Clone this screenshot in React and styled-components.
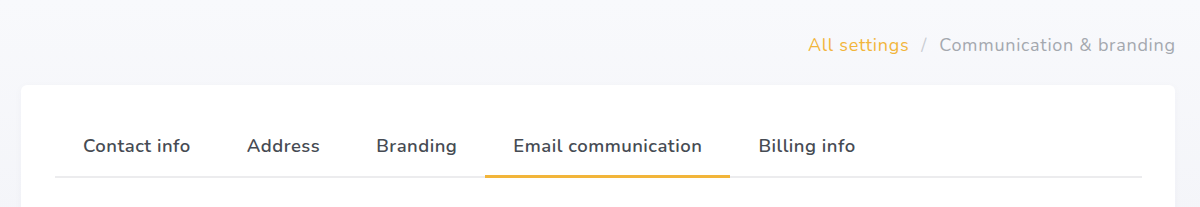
import React, { useState } from "react";
import styled, { createGlobalStyle } from "styled-components";

const Global = createGlobalStyle`
  html, body { margin: 0; padding: 0; }
  body {
    background: linear-gradient(180deg, #f8f9fc 0%, #f4f5f9 100%);
    font-family: "Nunito", "Lato", "Noto Sans", sans-serif;
    min-height: 207px;
  }
`;

const Page = styled.div`
  padding: 0 25px 0 21px;
`;

const Header = styled.div`
  height: 85px;
  display: flex;
  align-items: flex-start;
  justify-content: flex-end;
  padding-top: 33px;
  box-sizing: border-box;
`;

const Crumbs = styled.nav`
  display: flex;
  align-items: center;
  gap: 12px;
  font-size: 18px;
  line-height: 24px;
  letter-spacing: 0.72px;
`;

const CrumbLink = styled.a`
  color: #f2b53a;
  text-decoration: none;
  cursor: pointer;
`;

const Sep = styled.span`
  color: #c9ccd2;
`;

const CrumbCurrent = styled.span`
  color: #a4a8af;
  margin-right: -0.72px;
`;

const Card = styled.section`
  background: #fff;
  border-radius: 6px;
  padding: 30px 33px 40px 34px;
  box-shadow: 0 2px 10px rgba(30, 40, 80, 0.03);
`;

const TabList = styled.div`
  display: flex;
  box-shadow: inset 0 -2px 0 #ececee;
`;

const Tab = styled.button`
  appearance: none;
  background: none;
  border: 0;
  border-bottom: 3px solid ${(p) => (p.$active ? "#f2b53a" : "transparent")};
  padding: 19px 28px 17px;
  margin: 0;
  font-family: inherit;
  font-size: 18.5px;
  font-weight: 600;
  line-height: 24px;
  letter-spacing: 0.5px;
  color: #464b53;
  cursor: pointer;
  white-space: nowrap;
`;

const tabs = ["Contact info", "Address", "Branding", "Email communication", "Billing info"];

export default function App() {
  const [active, setActive] = useState(3);
  return (
    <>
      <Global />
      <Page>
        <Header>
          <Crumbs>
            <CrumbLink>All settings</CrumbLink>
            <Sep>/</Sep>
            <CrumbCurrent>Communication &amp; branding</CrumbCurrent>
          </Crumbs>
        </Header>
        <Card>
          <TabList>
            {tabs.map((t, i) => (
              <Tab key={t} $active={i === active} onClick={() => setActive(i)}>
                {t}
              </Tab>
            ))}
          </TabList>
        </Card>
      </Page>
    </>
  );
}
